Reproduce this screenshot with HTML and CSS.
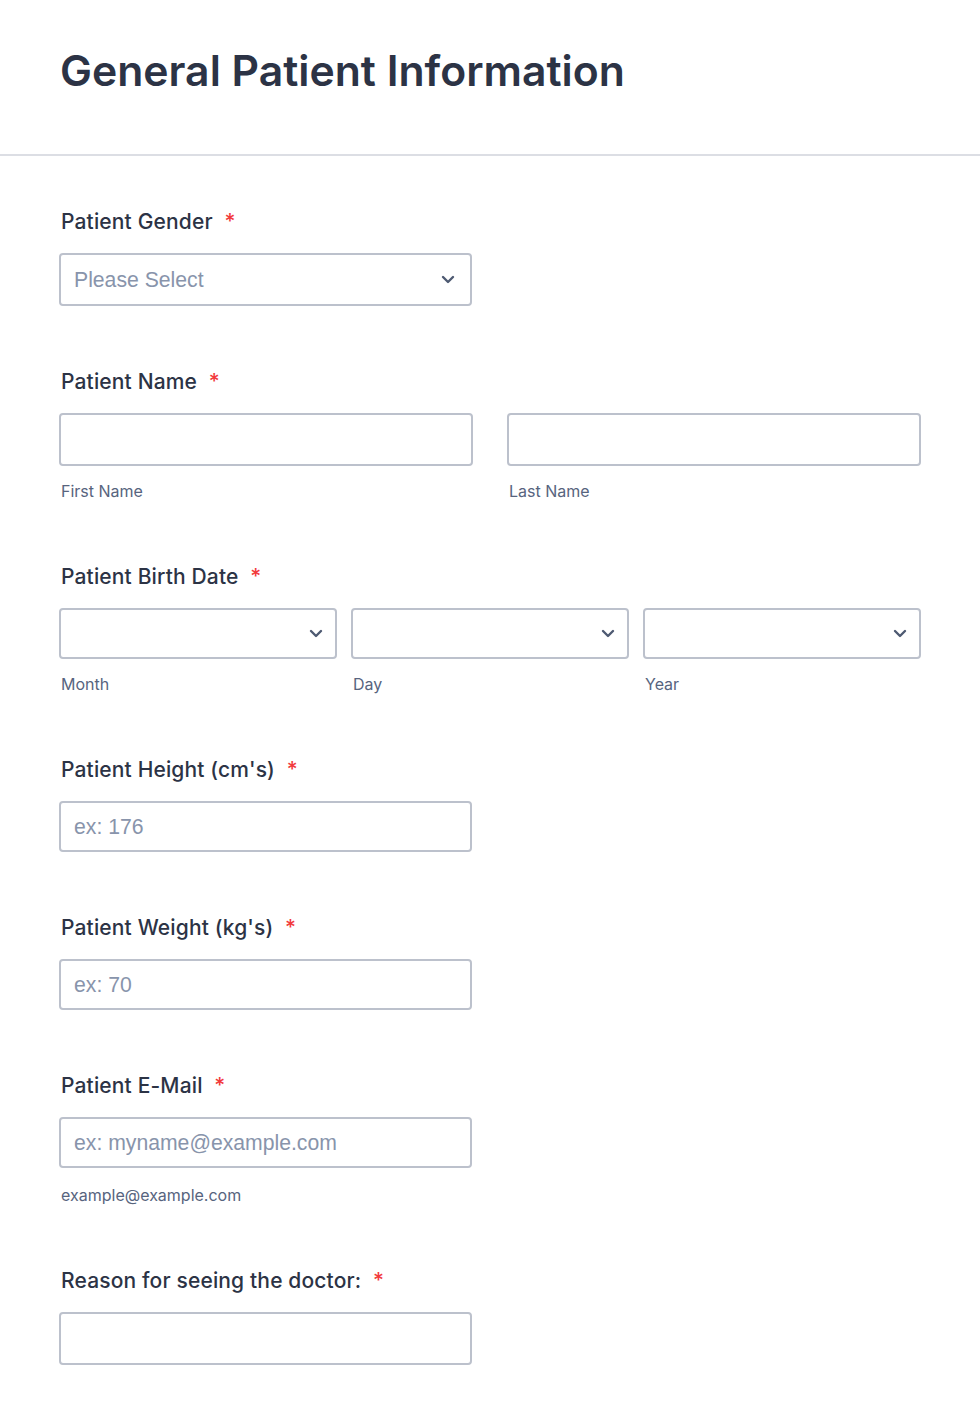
FILE: index.html
```html
<!DOCTYPE html>
<html lang="en">
<head>
<meta charset="utf-8">
<title>General Patient Information</title>
<link rel="stylesheet" href="styles.css">
</head>
<body>
<header class="header">
  <h1 class="title">General Patient Information</h1>
</header>
<main class="form">
  <section class="field">
    <label class="label">Patient Gender <span class="req">*</span></label>
    <div class="select half tall">
      <span class="select-text">Please Select</span>
      <svg class="chev" width="14" height="9" viewBox="0 0 14 9"><path d="M2 2l5 5 5-5" fill="none" stroke="#4e5a72" stroke-width="2.4" stroke-linecap="round" stroke-linejoin="round"/></svg>
    </div>
  </section>

  <section class="field">
    <label class="label">Patient Name <span class="req">*</span></label>
    <div class="row two">
      <div class="col">
        <input class="input tall" type="text">
        <span class="sublabel">First Name</span>
      </div>
      <div class="col">
        <input class="input tall" type="text">
        <span class="sublabel">Last Name</span>
      </div>
    </div>
  </section>

  <section class="field">
    <label class="label">Patient Birth Date <span class="req">*</span></label>
    <div class="row three">
      <div class="col">
        <div class="select compact"><span class="select-text"></span><svg class="chev" width="14" height="9" viewBox="0 0 14 9"><path d="M2 2l5 5 5-5" fill="none" stroke="#4e5a72" stroke-width="2.4" stroke-linecap="round" stroke-linejoin="round"/></svg></div>
        <span class="sublabel">Month</span>
      </div>
      <div class="col">
        <div class="select compact"><span class="select-text"></span><svg class="chev" width="14" height="9" viewBox="0 0 14 9"><path d="M2 2l5 5 5-5" fill="none" stroke="#4e5a72" stroke-width="2.4" stroke-linecap="round" stroke-linejoin="round"/></svg></div>
        <span class="sublabel">Day</span>
      </div>
      <div class="col">
        <div class="select compact"><span class="select-text"></span><svg class="chev" width="14" height="9" viewBox="0 0 14 9"><path d="M2 2l5 5 5-5" fill="none" stroke="#4e5a72" stroke-width="2.4" stroke-linecap="round" stroke-linejoin="round"/></svg></div>
        <span class="sublabel">Year</span>
      </div>
    </div>
  </section>

  <section class="field">
    <label class="label">Patient Height (cm's) <span class="req">*</span></label>
    <input class="input half" type="text" placeholder="ex: 176">
  </section>

  <section class="field">
    <label class="label">Patient Weight (kg's) <span class="req">*</span></label>
    <input class="input half" type="text" placeholder="ex: 70">
  </section>

  <section class="field">
    <label class="label">Patient E-Mail <span class="req">*</span></label>
    <input class="input half" type="email" placeholder="ex: myname@example.com">
    <span class="sublabel sub-email">example@example.com</span>
  </section>

  <section class="field">
    <label class="label">Reason for seeing the doctor: <span class="req">*</span></label>
    <input class="input half tall" type="text">
  </section>
</main>
</body>
</html>
```

FILE: styles.css
```css
* { box-sizing: border-box; }

body {
  margin: 0;
  background: #ffffff;
  font-family: Inter, "Noto Sans", "Liberation Sans", sans-serif;
  color: #2c3345;
}

.header {
  padding: 44px 60px 0;
  height: 156px;
  border-bottom: 2px solid #dcdee4;
}

.title {
  margin: 0;
  font-size: 42.7px;
  line-height: 53px;
  font-weight: 600;
  color: #2c3345;
  letter-spacing: 0;
}

.form {
  padding: 52px 59px 40px;
  display: flex;
  flex-direction: column;
  gap: 62px;
}

.field {
  display: flex;
  flex-direction: column;
  align-items: flex-start;
}

.label {
  display: block;
  font-size: 21px;
  line-height: 28px;
  font-weight: 500;
  color: #2c3345;
  padding-left: 2px;
  margin-bottom: 17px;
  letter-spacing: 0.15px;
}

.req {
  color: #f23a3c;
  margin-left: 6px;
}

.row {
  display: grid;
  width: 100%;
}

.row.two {
  grid-template-columns: 1fr 1fr;
  column-gap: 34px;
}

.row.three {
  grid-template-columns: 1fr 1fr 1fr;
  column-gap: 14px;
}

.col {
  display: flex;
  flex-direction: column;
  min-width: 0;
}

.input,
.select {
  width: 100%;
  height: 51px;
  border: 2px solid #bcc1cc;
  border-radius: 4px;
  background: #ffffff;
  font-family: "Liberation Sans", Arial, sans-serif;
  font-size: 21.2px;
  color: #2c3345;
  padding: 0 13px;
  outline: none;
}

.input::placeholder {
  color: #8894ab;
}

.half {
  width: 413px;
}

.tall {
  height: 53px;
}

.select {
  display: flex;
  align-items: center;
  justify-content: space-between;
  padding: 0 15px 0 13px;
}

.select.compact {
  padding-right: 12px;
}

.select-text {
  color: #8894ab;
  font-size: 21.2px;
}

.chev {
  flex: none;
}

.sublabel {
  display: block;
  margin-top: 15px;
  padding-left: 2px;
  font-size: 16px;
  line-height: 20px;
  color: #57647e;
}

.sub-email {
  margin-top: 17px;
}
```
